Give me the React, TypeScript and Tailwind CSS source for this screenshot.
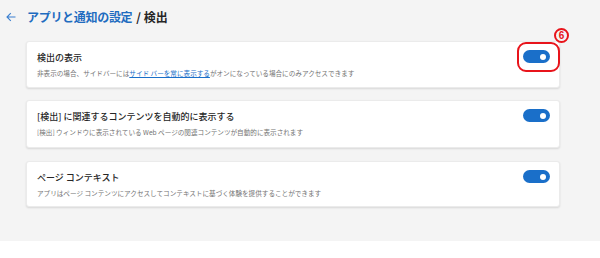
import React from "react";

const font = { fontFamily: '"Noto Sans CJK JP", "Noto Sans", sans-serif' };

function Toggle() {
  return (
    <div className="relative w-[27px] h-[13px] rounded-full bg-[#1a6fc9] shrink-0">
      <div className="absolute right-[4px] top-[3.5px] w-[6px] h-[6px] rounded-full bg-white" />
    </div>
  );
}

function Card({
  title,
  desc,
  highlight,
  h,
}: {
  title: React.ReactNode;
  desc: React.ReactNode;
  highlight?: boolean;
  h: string;
}) {
  return (
    <div className={`relative bg-white rounded-[3px] shadow-[0_1px_2px_rgba(0,0,0,0.12)] border border-[#ebebeb] ${h} flex justify-between pl-[10px] pr-[9px]`}>
      <div className="flex flex-col pt-[9px]">
        <div className="text-[9px] leading-[13px] text-[#262626] font-medium">{title}</div>
        <div className="text-[6.6px] leading-[10px] mt-[4px] text-[#737373]">{desc}</div>
      </div>
      <div className="pt-[8px]">
        <Toggle />
      </div>
      {highlight && (
        <>
          <div className="absolute left-[490px] top-[0px] w-[43px] h-[30px] rounded-[9px] border-[2px] border-[#e8141b]" />
          <div
            className="absolute left-[527px] top-[-14px] w-[15px] h-[15px] rounded-full border-[2px] border-[#e8141b] flex items-center justify-center text-[10px] leading-none font-bold text-[#e8141b]"
            style={{ fontFamily: '"Liberation Sans", Arial, sans-serif' }}
          >
            6
          </div>
        </>
      )}
    </div>
  );
}

export default function App() {
  return (
    <div className="w-[600px] h-[258px] bg-white overflow-hidden" style={font}>
      <div className="h-[241px] bg-[#f4f4f4]">
        <div className="h-[34px] flex items-center pl-[6px]">
          <svg width="10" height="10" viewBox="0 0 10 10" className="mr-[11px]">
            <path d="M9.5 5H1M4.8 1.2L1 5l3.8 3.8" fill="none" stroke="#3a7fd0" strokeWidth="1.1" />
          </svg>
          <span className="text-[12px] font-bold text-[#1f6cc0] tracking-[-0.3px]">アプリと通知の設定</span>
          <span className="text-[12px] font-bold text-[#262626] ml-[4px]">/ 検出</span>
        </div>
        <div className="mt-[7px] pl-[26px] pr-[40px] flex flex-col">
          <Card
            highlight
            h="h-[47px]"
            title="検出の表示"
            desc={
              <>
                非表示の場合、サイドバーには
                <span className="text-[#1a6fc9] underline">サイド バーを常に表示する</span>
                がオンになっている場合にのみアクセスできます
              </>
            }
          />
          <div className="h-[12px]" />
          <Card
            h="h-[48px]"
            title="[検出] に関連するコンテンツを自動的に表示する"
            desc="[検出] ウィンドウに表示されている Web ページの関連コンテンツが自動的に表示されます"
          />
          <div className="h-[13px]" />
          <Card
            h="h-[46px]"
            title="ページ コンテキスト"
            desc="アプリはページ コンテンツにアクセスしてコンテキストに基づく体験を提供することができます"
          />
        </div>
      </div>
    </div>
  );
}
